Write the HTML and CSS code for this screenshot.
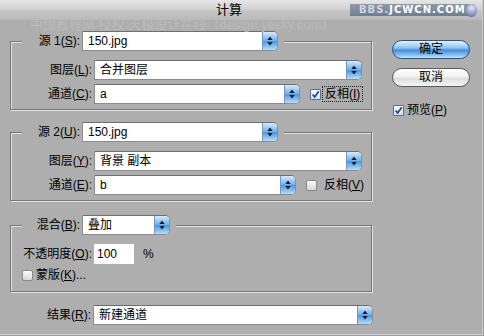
FILE: index.html
```html
<!DOCTYPE html>
<html lang="zh-CN">
<head>
    <meta charset="UTF-8">
    <title>计算</title>
    <link rel="stylesheet" href="styles.css">
</head>
<body>
    <div class="titlebar">
        <span class="title">计算</span>
        <span class="logo"><span class="logo-dim">BBS.</span>JCWCN.COM<span class="orb"></span></span>
    </div>
    <div class="watermark">中国教程网 授权 天极设计在线（design.yesky.com）</div>

    <div class="dialog">
        <div class="main">
            <fieldset class="group">
                <legend>
                    <div class="legend-row">
                        <span class="legend-lbl">源 1(<u>S</u>):</span>
                        <div class="select w-src"><span class="val">150.jpg</span><span class="arrow"><svg viewBox="0 0 14 20"><path d="M7 5l-3 4h6zM7 15l-3-4h6z"/></svg></span></div>
                    </div>
                </legend>
                <div class="row">
                    <span class="lbl">图层(<u>L</u>):</span>
                    <div class="select w-wide"><span class="val">合并图层</span><span class="arrow"><svg viewBox="0 0 14 20"><path d="M7 5l-3 4h6zM7 15l-3-4h6z"/></svg></span></div>
                </div>
                <div class="row">
                    <span class="lbl">通道(<u>C</u>):</span>
                    <div class="select w-ch1"><span class="val">a</span><span class="arrow"><svg viewBox="0 0 14 20"><path d="M7 5l-3 4h6zM7 15l-3-4h6z"/></svg></span></div>
                    <span class="check">
                        <span class="box on"><svg viewBox="0 0 11 11"><path d="M2 5.5l2.5 3L9.5 1.5"/></svg></span>
                        <span class="check-txt focus">反相(<u>I</u>)</span>
                    </span>
                </div>
            </fieldset>

            <fieldset class="group">
                <legend>
                    <div class="legend-row">
                        <span class="legend-lbl">源 2(<u>U</u>):</span>
                        <div class="select w-src"><span class="val">150.jpg</span><span class="arrow"><svg viewBox="0 0 14 20"><path d="M7 5l-3 4h6zM7 15l-3-4h6z"/></svg></span></div>
                    </div>
                </legend>
                <div class="row">
                    <span class="lbl">图层(<u>Y</u>):</span>
                    <div class="select w-wide"><span class="val">背景 副本</span><span class="arrow"><svg viewBox="0 0 14 20"><path d="M7 5l-3 4h6zM7 15l-3-4h6z"/></svg></span></div>
                </div>
                <div class="row">
                    <span class="lbl">通道(<u>E</u>):</span>
                    <div class="select w-ch2"><span class="val">b</span><span class="arrow"><svg viewBox="0 0 14 20"><path d="M7 5l-3 4h6zM7 15l-3-4h6z"/></svg></span></div>
                    <span class="check">
                        <span class="box"></span>
                        <span class="check-txt">反相(<u>V</u>)</span>
                    </span>
                </div>
            </fieldset>

            <fieldset class="group blend">
                <legend>
                    <div class="legend-row">
                        <span class="legend-lbl">混合(<u>B</u>):</span>
                        <div class="select w-blend"><span class="val">叠加</span><span class="arrow"><svg viewBox="0 0 14 20"><path d="M7 5l-3 4h6zM7 15l-3-4h6z"/></svg></span></div>
                    </div>
                </legend>
                <div class="row">
                    <span class="lbl">不透明度(<u>O</u>):</span>
                    <div class="num">100</div>
                    <span class="pct">%</span>
                </div>
                <div class="row mask-row">
                    <span class="box"></span>
                    <span class="mask-txt">蒙版(<u>K</u>)...</span>
                </div>
            </fieldset>

            <div class="row result-row">
                <span class="lbl">结果(<u>R</u>):</span>
                <div class="select w-result"><span class="val">新建通道</span><span class="arrow"><svg viewBox="0 0 14 20"><path d="M7 5l-3 4h6zM7 15l-3-4h6z"/></svg></span></div>
            </div>
        </div>

        <div class="side">
            <div class="btn ok">确定</div>
            <div class="btn cancel">取消</div>
            <div class="preview">
                <span class="box on"><svg viewBox="0 0 11 11"><path d="M2 5.5l2.5 3L9.5 1.5"/></svg></span>
                <span class="preview-txt">预览(<u>P</u>)</span>
            </div>
        </div>
    </div>
</body>
</html>
```

FILE: styles.css
```css
:root {
    --bg: #aeaeae;
    --frame-dark: #767676;
    --frame-light: #e2e2e2;
    --aqua-top: #d6ebfc;
    --aqua-mid: #6fb0ec;
    --aqua-low: #4f96de;
    --aqua-bottom: #b6dcfb;
}

html {
    background: #9c9c9c;
}

body {
    margin: 0;
    width: 483px;
    height: 335px;
    box-sizing: border-box;
    border-right: 1px solid #cacaca;
    border-bottom: 1px solid #d2d2d2;
    background: var(--bg);
    color: #000;
    font: 12px/14px "Liberation Sans", "Noto Sans CJK SC", sans-serif;
    overflow: hidden;
    position: relative;
}

u {
    text-underline-offset: 1px;
}

/* title bar */
.titlebar {
    height: 20px;
    display: flex;
    align-items: center;
    background: linear-gradient(#e6e6e6, #d2d2d2 45%, #c4c4c4 55%, #bababa);
}

.title {
    margin-left: 216px;
    font-size: 13px;
}

.logo {
    margin-left: auto;
    margin-right: 8px;
    width: 124px;
    height: 12px;
    box-sizing: border-box;
    padding-left: 9px;
    display: flex;
    align-items: center;
    background: linear-gradient(#8e9aab, #6f7d90);
    color: #fff;
    font: bold 10px/12px "DejaVu Sans", sans-serif;
    letter-spacing: 1px;
}

.logo-dim {
    color: #d4d8de;
}

.orb {
    margin-left: auto;
    margin-right: -3px;
    width: 13px;
    height: 13px;
    border-radius: 50%;
    background: radial-gradient(circle at 50% 30%, #e4e8f4, #8d96c4 60%, #5b6396);
}

.watermark {
    position: absolute;
    left: 30px;
    top: 18px;
    color: #bababa;
    font-size: 13px;
    line-height: 14px;
    white-space: nowrap;
}

/* dialog body */
.dialog {
    display: flex;
    padding-left: 10px;
}

.main {
    width: 362px;
    flex-shrink: 0;
}

.side {
    margin-left: 20px;
    width: 78px;
    padding-top: 20px;
}

.group {
    margin: 11px 0 0;
    padding: 5px 0 5px;
    min-width: 0;
    border: 1px solid var(--frame-dark);
    box-shadow: inset 1px 1px 0 var(--frame-light), 1px 1px 0 var(--frame-light);
}

.group + .group {
    margin-top: 12px;
}

.group.blend {
    margin-top: 14px;
    padding-bottom: 9px;
}

legend {
    margin-left: 11px;
    padding: 0 6px 0 11px;
    background: var(--bg);
}

.legend-row {
    display: flex;
    align-items: center;
}

.legend-lbl {
    width: 47px;
    margin-right: 2px;
    text-align: right;
    white-space: nowrap;
}

.row {
    display: flex;
    align-items: center;
    margin-top: 4px;
}

.lbl {
    width: 81px;
    margin-right: 2px;
    text-align: right;
    white-space: nowrap;
    flex-shrink: 0;
}

/* popup menu */
.select {
    height: 20px;
    box-sizing: border-box;
    flex-shrink: 0;
    display: flex;
    align-items: center;
    background: #fff;
    border: 1px solid #8c8c8c;
    border-top-color: #6e6e6e;
    border-radius: 0 5px 5px 0;
    overflow: hidden;
}

.val {
    padding-left: 5px;
    white-space: nowrap;
}

.arrow {
    margin-left: auto;
    width: 14px;
    height: 100%;
    background: linear-gradient(var(--aqua-top), var(--aqua-mid) 48%, var(--aqua-low) 52%, var(--aqua-bottom));
    border-left: 1px solid #6d97c4;
}

.arrow svg {
    display: block;
    width: 14px;
    height: 18px;
    fill: #0e1f3a;
}

.w-src { width: 196px; }
.w-wide { width: 268px; }
.w-ch1 { width: 206px; }
.w-ch2 { width: 202px; }
.w-blend { width: 88px; }
.w-result { width: 280px; }

/* check boxes */
.check {
    display: flex;
    align-items: center;
    margin-left: 10px;
}

.box {
    width: 11px;
    height: 11px;
    box-sizing: border-box;
    flex-shrink: 0;
    border: 1px solid #8a8a8a;
    border-radius: 2px;
    background: linear-gradient(#fdfdfd, #d6d6d6);
}

.box.on {
    border-color: #5a6f96;
    border-radius: 1px;
    background: linear-gradient(#ffffff, #cfdff2);
}

.box svg {
    display: block;
    width: 9px;
    height: 9px;
    fill: none;
    stroke: #1b3c86;
    stroke-width: 2;
}

.check-txt {
    margin-left: 4px;
    padding: 0 2px;
    border: 1px solid transparent;
}

.check-txt.focus {
    margin-left: 1px;
    border: 1px dotted #222;
}

.num {
    width: 40px;
    height: 20px;
    box-sizing: border-box;
    padding-left: 3px;
    line-height: 20px;
    background: #fff;
}

.pct {
    margin-left: 9px;
}

.mask-row {
    padding-left: 11px;
}

.mask-txt {
    margin-left: 3px;
}

.result-row {
    margin-top: 13px;
}

/* buttons */
.btn {
    height: 19px;
    box-sizing: border-box;
    border-radius: 10px;
    text-align: center;
    line-height: 17px;
}

.ok {
    border: 1px solid #2d4f86;
    background: linear-gradient(#e4f2ff, #8ec4f2 40%, #4a8edc 55%, #7cbcf2 80%, #c4e6ff);
}

.cancel {
    margin-top: 9px;
    border: 1px solid #5c5c5c;
    background: linear-gradient(#ffffff, #f2f2f2 45%, #dedede 55%, #f4f4f4);
}

.preview {
    display: flex;
    align-items: center;
    margin-top: 16px;
    padding-left: 1px;
}

.preview-txt {
    margin-left: 3px;
}
```
